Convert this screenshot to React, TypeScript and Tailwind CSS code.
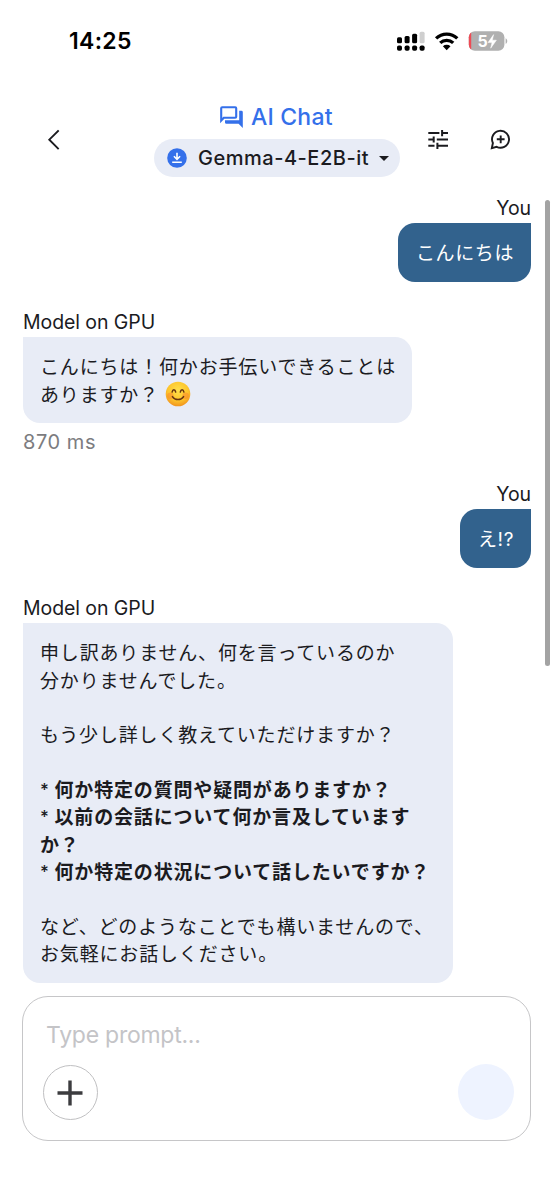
import React from "react";

const JP = "font-['Inter','Noto_Sans_CJK_JP',sans-serif]";

function StatusBar() {
  return (
    <div className="flex h-[82px] shrink-0 items-center justify-between pr-[46px] pl-[69px] font-['Inter',sans-serif]">
      <span className="text-[23px] leading-[83px] font-semibold tracking-[0.3px] text-black">14:25</span>
      <svg width="112" height="24" viewBox="396 29 112 24" aria-hidden="true">
        <g fill="#000">
          <rect x="397" y="37.3" width="5" height="6" rx="1.5" />
          <rect x="404.6" y="36" width="5" height="7.3" rx="1.5" />
          <rect x="412.1" y="33.7" width="5" height="9.6" rx="1.5" />
          <rect x="419.6" y="31.7" width="5" height="11.6" rx="1.5" fill="#cfcfcf" />
          <rect x="397" y="45.5" width="5" height="5.2" rx="1.8" />
          <rect x="404.6" y="45.5" width="5" height="5.2" rx="1.8" />
          <rect x="412.1" y="45.5" width="5" height="5.2" rx="1.8" />
          <rect x="419.6" y="45.5" width="5" height="5.2" rx="1.8" />
        </g>
        <g fill="none" stroke="#000" strokeWidth="3.3">
          <path d="M436.1 38.4a15.3 15.3 0 0 1 21.2 0" />
          <path d="M440.2 42.9a9.4 9.4 0 0 1 13 0" />
        </g>
        <path d="M442.9 46.2a5.6 5.6 0 0 1 7.6 0l-3.8 4z" fill="#000" />
        <clipPath id="battery">
          <rect x="468.8" y="31.3" width="35.6" height="19.4" rx="6" />
        </clipPath>
        <g clipPath="url(#battery)">
          <rect x="468" y="31" width="37" height="20" fill="#b0b0b0" />
          <rect x="468" y="31" width="3.2" height="20" fill="#ee4b55" />
        </g>
        <path d="M505.6 38.2c2.2.9 2.2 4.7 0 5.6z" fill="#b0b0b0" />
        <text x="477.6" y="47" fontSize="16" fontWeight="700" fill="#fff">5</text>
        <path d="M493.6 34.6l-5.6 8h4l-1.3 5.6 5.7-8h-4.1z" fill="#fff" stroke="#fff" strokeWidth=".5" />
      </svg>
    </div>
  );
}

function Header() {
  return (
    <header className="grid h-[102px] shrink-0 grid-cols-[154px_246px_154px] pt-[20px]">
      <div className="pt-[26px] pl-[44px]">
        <svg width="20" height="24" viewBox="44 128 20 24" fill="none" stroke="#1b1b1f" strokeWidth="1.9" strokeLinecap="square">
          <path d="M58 131l-8.7 8.7 8.7 8.7" />
        </svg>
      </div>
      <div className="flex flex-col items-start">
        <div className="ml-[65px] flex h-[30px] items-center gap-[7px] text-[#3470ea]">
          <svg width="25" height="25" viewBox="219 105 25 25" fill="none">
            <path d="M221.2 120.6V108.2q0-1 1-1h13q1 0 1 1v8.6q0 1-1 1h-11.4z" stroke="currentColor" strokeWidth="2.1" />
            <path d="M239.2 110.8h2.2q1.4 0 1.4 1.4v15.9l-4.2-4.3h-12.2q-1.4 0-1.4-1.4v-2.1h14.2z" fill="currentColor" />
          </svg>
          <span className="text-[23px] leading-[30px] font-[450] tracking-[0.2px] whitespace-nowrap">AI Chat</span>
        </div>
        <div className="mt-[7px] flex h-[38px] w-[246px] items-center rounded-full bg-[#e8ecf6] pl-[13px] text-[#1b1b1f]">
          <svg width="20" height="20" viewBox="0 0 20 20" fill="none">
            <circle cx="10" cy="10" r="9.8" fill="#3470ea" />
            <path d="M10 4.8v6M6.9 8.3L10 11.3l3.1-3M5.2 14.3h9.6" stroke="#fff" strokeWidth="1.6" />
          </svg>
          <span className="ml-[11px] w-[171px] text-[20px] leading-[37px] font-[450] tracking-[0.52px] whitespace-nowrap">Gemma-4-E2B-it</span>
          <svg width="10" height="5" viewBox="0 0 10 5" className="ml-[10px]">
            <path d="M0 0h10L5 5z" fill="#1b1b1f" />
          </svg>
        </div>
      </div>
      <div className="flex gap-[39px] pt-[26px] pl-[26px]">
        <svg width="24" height="24" viewBox="426 128 24 24" fill="none" stroke="#1b1b1f" strokeWidth="2">
          <path d="M428.3 133.1H439.4M442.1 133.1H448M442.1 130v6.2M428.3 139.5H433.7M433.7 136.4v6.2M436.8 139.5H448M428.3 145.8H434.5M437.4 145.8H448M437.4 142.7v6.2" />
        </svg>
        <svg width="24" height="24" viewBox="489 128 24 24" fill="none" stroke="#1b1b1f" strokeWidth="1.9">
          <path d="M491.8 148.2l1.1-5.2a8.5 8.5 0 1 1 3.7 3.8zM500.7 135.4v7.8M496.8 139.3h7.8" />
        </svg>
      </div>
    </header>
  );
}

function Smile() {
  return (
    <svg width="26" height="26" viewBox="0 0 26 26" className="mt-[-2px] ml-[6px] shrink-0" role="img" aria-label="smiling face">
      <defs>
        <radialGradient id="face" cx=".5" cy=".35" r=".68">
          <stop offset="0" stopColor="#ffe04a" />
          <stop offset=".6" stopColor="#fdc52c" />
          <stop offset="1" stopColor="#ef8e1c" />
        </radialGradient>
      </defs>
      <circle cx="13" cy="13" r="12.3" fill="url(#face)" />
      <circle cx="5.4" cy="14.8" r="3.2" fill="#f9722b" opacity=".4" />
      <circle cx="20.6" cy="14.8" r="3.2" fill="#f9722b" opacity=".4" />
      <g fill="none" stroke="#673412" strokeWidth="1.5" strokeLinecap="round">
        <path d="M7.1 11.1c.6-3.1 3-3.1 3.6 0M15.3 11.1c.6-3.1 3-3.1 3.6 0M7.4 15.6c2.6 4 8.6 4 11.2 0" />
      </g>
    </svg>
  );
}

function Sender({ children }: { children: React.ReactNode }) {
  return <div className="h-[29px] text-[19.5px] leading-[29.5px] tracking-[-0.08px] whitespace-nowrap text-[#1b1b1f]">{children}</div>;
}

function UserMessage({ text }: { text: string }) {
  return (
    <div className="flex flex-col items-end">
      <Sender>You</Sender>
      <div className={`h-[59px] rounded-[17px] rounded-tr-none bg-[#32628d] pr-[17px] pl-[18px] text-[19px] leading-[61px] tracking-[0.6px] whitespace-nowrap text-white ${JP}`}>
        {text}
      </div>
    </div>
  );
}

function ModelBubble({ className, children }: { className: string; children: React.ReactNode }) {
  return (
    <div className={`rounded-[17px] rounded-tl-none bg-[#e8ecf6] pt-[17.4px] pl-[17px] text-[19px] leading-[27.33px] tracking-[0.83px] whitespace-nowrap text-[#1b1b1f] ${JP} ${className}`}>
      {children}
    </div>
  );
}

function Bullet({ children }: { children: React.ReactNode }) {
  return (
    <li className="flex">
      <span className="w-[14.5px] shrink-0 text-[17px] font-medium tracking-normal">*</span>
      <span>{children}</span>
    </li>
  );
}

export default function App() {
  return (
    <div className="relative flex h-[1200px] w-[554px] flex-col overflow-hidden bg-white font-['Inter',sans-serif]">
      <StatusBar />
      <Header />
      <main className="flex h-[799px] shrink-0 flex-col pt-[10px] pr-[23px] pl-[23px]">
        <UserMessage text="こんにちは" />
        <div className="mt-[26px]">
          <Sender>Model on GPU</Sender>
          <ModelBubble className="h-[86px] w-[389px]">
            <p>こんにちは！何かお手伝いできることは</p>
            <p className="flex items-center">ありますか？<Smile /></p>
          </ModelBubble>
          <div className="h-[38px] text-[20px] leading-[38px] tracking-[0.55px] text-[#7c7c80]">870 ms</div>
        </div>
        <div className="mt-[19px]">
          <UserMessage text="え!?" />
        </div>
        <div className="mt-[26px]">
          <Sender>Model on GPU</Sender>
          <ModelBubble className="h-[360px] w-[430px]">
            <p>申し訳ありません、何を言っているのか</p>
            <p>分かりませんでした。</p>
            <p className="mt-[27.33px]">もう少し詳しく教えていただけますか？</p>
            <ul className="my-[27.33px] font-bold">
              <Bullet>何か特定の質問や疑問がありますか？</Bullet>
              <Bullet>以前の会話について何か言及しています</Bullet>
              <li>か？</li>
              <Bullet>何か特定の状況について話したいですか？</Bullet>
            </ul>
            <p>など、どのようなことでも構いませんので、</p>
            <p>お気軽にお話しください。</p>
          </ModelBubble>
        </div>
      </main>
      <footer className="shrink-0 pt-[13px] pr-[23px] pl-[22px]">
        <div className="flex h-[145px] flex-col rounded-[26px] border-[1.5px] border-[#c6c6c8] pr-[16px] pl-[20px]">
          <div className="pt-[19px] pl-[3px] text-[23px] leading-[38px] tracking-[-0.25px] text-[#c4c4c7]">Type prompt...</div>
          <div className="mt-[10px] flex items-center justify-between">
            <button className="flex h-[55px] w-[55px] items-center justify-center rounded-full border border-[#c0c0c2]" aria-label="Add">
              <svg width="26" height="26" viewBox="0 0 26 26" className="mt-px mr-px" stroke="#3c3c3f" strokeWidth="3.4">
                <path d="M13 .5v25M.5 13h25" />
              </svg>
            </button>
            <button className="h-[56px] w-[56px] rounded-full bg-[#eef3ff]" aria-label="Send" />
          </div>
        </div>
      </footer>
      <div className="absolute top-[200px] left-[545px] h-[466px] w-[5px] rounded-full bg-[#a3a3a3]" />
    </div>
  );
}
